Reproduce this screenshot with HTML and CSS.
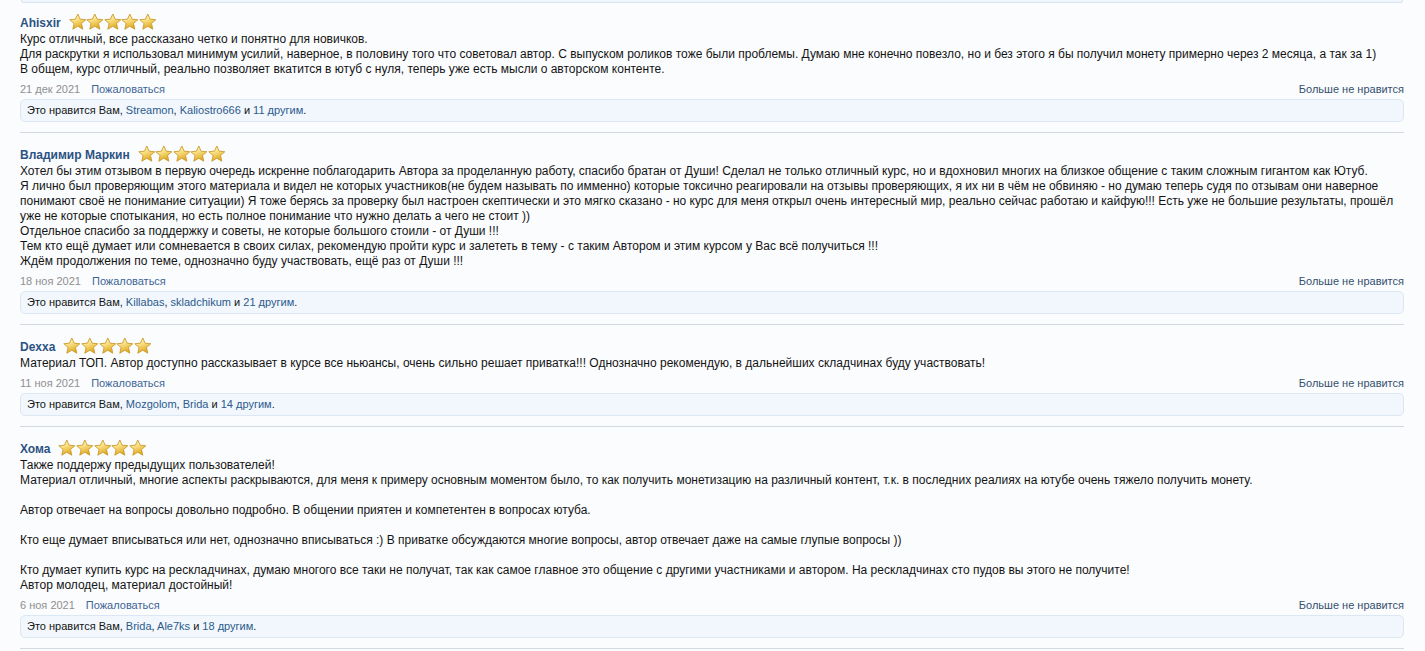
FILE: index.html
```html
<!DOCTYPE html>
<html lang="ru">
<head>
    <meta charset="UTF-8">
    <title>Отзывы</title>
    <link rel="stylesheet" href="styles.css">
</head>
<body>
<svg class="defs" width="0" height="0">
    <defs>
        <linearGradient id="starFill" x1="0" y1="0" x2="0.4" y2="1">
            <stop offset="0" stop-color="#fffbe0"/>
            <stop offset="0.45" stop-color="#fbe38a"/>
            <stop offset="1" stop-color="#e0a91f"/>
        </linearGradient>
        <symbol id="star" viewBox="0 0 18 18">
            <path d="M9 0.8 L11.4 6.1 L17.2 6.7 L12.8 10.5 L14.1 16.4 L9 13.3 L3.9 16.4 L5.2 10.5 L0.8 6.7 L6.6 6.1 Z" fill="url(#starFill)" stroke="#c99a2a" stroke-width="0.9" stroke-linejoin="round"/>
        </symbol>
    </defs>
</svg>

<div id="wrap">
    <div class="topBox"></div>

    <div class="review first">
        <div class="rHead">
            <a class="rName">Ahisxir</a>
            <span class="stars"><svg><use href="#star"/></svg><svg><use href="#star"/></svg><svg><use href="#star"/></svg><svg><use href="#star"/></svg><svg><use href="#star"/></svg></span>
        </div>
        <div class="rText">
            Курс отличный, все рассказано четко и понятно для новичков.<br>
            Для раскрутки я использовал минимум усилий, наверное, в половину того что советовал автор. С выпуском роликов тоже были проблемы. Думаю мне конечно повезло, но и без этого я бы получил монету примерно через 2 месяца, а так за 1)<br>
            В общем, курс отличный, реально позволяет вкатится в ютуб с нуля, теперь уже есть мысли о авторском контенте.
        </div>
        <div class="rMeta">
            <div><span class="date">21 дек 2021</span><a class="report">Пожаловаться</a></div>
            <a class="unlike">Больше не нравится</a>
        </div>
        <div class="likes">Это нравится Вам, <a>Streamon</a>, <a>Kaliostro666</a> и <a>11 другим</a>.</div>
    </div>

    <div class="review">
        <div class="rHead">
            <a class="rName">Владимир Маркин</a>
            <span class="stars"><svg><use href="#star"/></svg><svg><use href="#star"/></svg><svg><use href="#star"/></svg><svg><use href="#star"/></svg><svg><use href="#star"/></svg></span>
        </div>
        <div class="rText">
            Хотел бы этим отзывом в первую очередь искренне поблагодарить Автора за проделанную работу, спасибо братан от Души! Сделал не только отличный курс, но и вдохновил многих на близкое общение с таким сложным гигантом как Ютуб.<br>
            Я лично был проверяющим этого материала и видел не которых участников(не будем называть по имменно) которые токсично реагировали на отзывы проверяющих, я их ни в чём не обвиняю - но думаю теперь судя по отзывам они наверное понимают своё не понимание ситуации) Я тоже берясь за проверку был настроен скептически и это мягко сказано - но курс для меня открыл очень интересный мир, реально сейчас работаю и кайфую!!! Есть уже не большие результаты, прошёл уже не которые спотыкания, но есть полное понимание что нужно делать а чего не стоит ))<br>
            Отдельное спасибо за поддержку и советы, не которые большого стоили - от Души !!!<br>
            Тем кто ещё думает или сомневается в своих силах, рекомендую пройти курс и залететь в тему - с таким Автором и этим курсом у Вас всё получиться !!!<br>
            Ждём продолжения по теме, однозначно буду участвовать, ещё раз от Души !!!
        </div>
        <div class="rMeta">
            <div><span class="date">18 ноя 2021</span><a class="report">Пожаловаться</a></div>
            <a class="unlike">Больше не нравится</a>
        </div>
        <div class="likes">Это нравится Вам, <a>Killabas</a>, <a>skladchikum</a> и <a>21 другим</a>.</div>
    </div>

    <div class="review">
        <div class="rHead">
            <a class="rName">Dexxa</a>
            <span class="stars"><svg><use href="#star"/></svg><svg><use href="#star"/></svg><svg><use href="#star"/></svg><svg><use href="#star"/></svg><svg><use href="#star"/></svg></span>
        </div>
        <div class="rText">
            Материал ТОП. Автор доступно рассказывает в курсе все ньюансы, очень сильно решает приватка!!! Однозначно рекомендую, в дальнейших складчинах буду участвовать!
        </div>
        <div class="rMeta">
            <div><span class="date">11 ноя 2021</span><a class="report">Пожаловаться</a></div>
            <a class="unlike">Больше не нравится</a>
        </div>
        <div class="likes">Это нравится Вам, <a>Mozgolom</a>, <a>Brida</a> и <a>14 другим</a>.</div>
    </div>

    <div class="review">
        <div class="rHead">
            <a class="rName">Хома</a>
            <span class="stars"><svg><use href="#star"/></svg><svg><use href="#star"/></svg><svg><use href="#star"/></svg><svg><use href="#star"/></svg><svg><use href="#star"/></svg></span>
        </div>
        <div class="rText">
            Также поддержу предыдущих пользователей!<br>
            Материал отличный, многие аспекты раскрываются, для меня к примеру основным моментом было, то как получить монетизацию на различный контент, т.к. в последних реалиях на ютубе очень тяжело получить монету.<br>
            <br>
            Автор отвечает на вопросы довольно подробно. В общении приятен и компетентен в вопросах ютуба.<br>
            <br>
            Кто еще думает вписываться или нет, однозначно вписываться :) В приватке обсуждаются многие вопросы, автор отвечает даже на самые глупые вопросы ))<br>
            <br>
            Кто думает купить курс на рескладчинах, думаю многого все таки не получат, так как самое главное это общение с другими участниками и автором. На рескладчинах сто пудов вы этого не получите!<br>
            Автор молодец, материал достойный!
        </div>
        <div class="rMeta">
            <div><span class="date">6 ноя 2021</span><a class="report">Пожаловаться</a></div>
            <a class="unlike">Больше не нравится</a>
        </div>
        <div class="likes">Это нравится Вам, <a>Brida</a>, <a>Ale7ks</a> и <a>18 другим</a>.</div>
    </div>
</div>
</body>
</html>
```

FILE: styles.css
```css
*{ margin:0; padding:0; box-sizing:border-box;}
html, body{ background:#fbfcfe;}
body{ font-family:"Liberation Sans", Arial, sans-serif; font-size:12px; color:#141414;}
a{ cursor:pointer;}
.defs{ position:absolute; width:0; height:0; overflow:hidden;}
#wrap{ padding:0 21px 0 20px;}
.topBox{ height:3px; background:#f0f6fc; border:1px solid #d7e6f3; border-top:none; border-radius:0 0 5px 5px; margin-left:1px; margin-right:1px;}
.review{ padding:12px 0 10px; border-bottom:1px solid #d3d9e1;}
.review.first{ padding-top:10px;}
.rHead{ height:19px; display:flex; align-items:center;}
.rName{ font-weight:bold; font-size:12px; color:#2c5283; margin-right:8px;}
.stars{ display:flex; height:18px; margin-top:-2px;}
.stars svg{ width:17.6px; height:18px; display:block;}
.rText{ line-height:15px;}
.rMeta{ margin-top:5px; height:15px; line-height:15px; font-size:11px; display:flex; justify-content:space-between;}
.date{ color:#8f8f8f; margin-right:11px;}
.report{ color:#3d6594;}
.unlike{ color:#34506f;}
.likes{ margin-top:2px; height:23px; line-height:21px; padding:0 6px; font-size:11px; background:#f1f7fc; border:1px solid #dbe7f2; border-radius:5px;}
.likes a{ color:#2c5a8e;}
```
